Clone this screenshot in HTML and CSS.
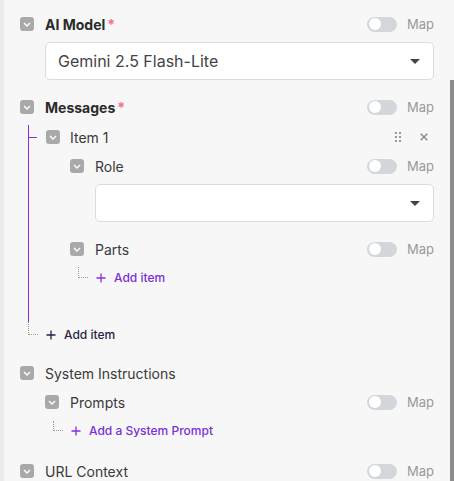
FILE: index.html
```html
<!DOCTYPE html>
<html lang="en">
<head>
<meta charset="UTF-8" />
<meta name="viewport" content="width=device-width, initial-scale=1" />
<title>Node parameters</title>
<link rel="stylesheet" href="styles.css">
</head>
<body>

<div class="panel">

  <!-- AI Model -->
  <div class="field">
    <div class="row">
      <span class="collapse"><svg width="8" height="5" viewBox="0 0 8 5"><path d="M1 1l3 3 3-3" fill="none" stroke="#fff" stroke-width="1.4"/></svg></span>
      <span class="label strong">AI Model<span class="req">*</span></span>
      <span class="map"><span class="toggle"></span>Map</span>
    </div>
    <div class="select"><span>Gemini 2.5 Flash-Lite</span><span class="caret"></span></div>
  </div>

  <!-- Messages -->
  <div class="field">
    <div class="row">
      <span class="collapse"><svg width="8" height="5" viewBox="0 0 8 5"><path d="M1 1l3 3 3-3" fill="none" stroke="#fff" stroke-width="1.4"/></svg></span>
      <span class="label strong">Messages<span class="req">*</span></span>
      <span class="map"><span class="toggle"></span>Map</span>
    </div>

    <div class="items">
      <div class="item-row">
        <span class="tick"></span>
        <span class="collapse"><svg width="8" height="5" viewBox="0 0 8 5"><path d="M1 1l3 3 3-3" fill="none" stroke="#fff" stroke-width="1.4"/></svg></span>
        <span class="label">Item 1</span>
        <span class="item-tools">
          <svg width="6" height="10" viewBox="0 0 6 10" fill="#999"><rect x="0" y="0" width="2" height="2"/><rect x="4" y="0" width="2" height="2"/><rect x="0" y="4" width="2" height="2"/><rect x="4" y="4" width="2" height="2"/><rect x="0" y="8" width="2" height="2"/><rect x="4" y="8" width="2" height="2"/></svg>
          <svg width="8" height="8" viewBox="0 0 8 8"><path d="M0.7 0.7l6.6 6.6M7.3 0.7l-6.6 6.6" stroke="#888" stroke-width="1.4"/></svg>
        </span>
      </div>

      <div class="item-body">
        <div class="field">
          <div class="row">
            <span class="collapse"><svg width="8" height="5" viewBox="0 0 8 5"><path d="M1 1l3 3 3-3" fill="none" stroke="#fff" stroke-width="1.4"/></svg></span>
            <span class="label">Role</span>
            <span class="map"><span class="toggle"></span>Map</span>
          </div>
          <div class="select"><span></span><span class="caret"></span></div>
        </div>

        <div class="field">
          <div class="row">
            <span class="collapse"><svg width="8" height="5" viewBox="0 0 8 5"><path d="M1 1l3 3 3-3" fill="none" stroke="#fff" stroke-width="1.4"/></svg></span>
            <span class="label">Parts</span>
            <span class="map"><span class="toggle"></span>Map</span>
          </div>
          <div class="add-row">
            <span class="elbow"></span>
            <svg class="plus" width="10" height="10" viewBox="0 0 10 10"><path d="M5 0.5v9M0.5 5h9" stroke="currentColor" stroke-width="1.3"/></svg>
            <span class="add-text">Add item</span>
          </div>
        </div>
      </div>
    </div>

    <div class="add-row outer">
      <span class="elbow"></span>
      <svg class="plus" width="10" height="10" viewBox="0 0 10 10"><path d="M5 0.5v9M0.5 5h9" stroke="currentColor" stroke-width="1.3"/></svg>
      <span class="add-text">Add item</span>
    </div>
  </div>

  <!-- System Instructions -->
  <div class="field">
    <div class="row">
      <span class="collapse"><svg width="8" height="5" viewBox="0 0 8 5"><path d="M1 1l3 3 3-3" fill="none" stroke="#fff" stroke-width="1.4"/></svg></span>
      <span class="label">System Instructions</span>
    </div>
    <div class="sub">
      <div class="row">
        <span class="collapse"><svg width="8" height="5" viewBox="0 0 8 5"><path d="M1 1l3 3 3-3" fill="none" stroke="#fff" stroke-width="1.4"/></svg></span>
        <span class="label">Prompts</span>
        <span class="map"><span class="toggle"></span>Map</span>
      </div>
      <div class="add-row">
        <span class="elbow"></span>
        <svg class="plus" width="10" height="10" viewBox="0 0 10 10"><path d="M5 0.5v9M0.5 5h9" stroke="currentColor" stroke-width="1.3"/></svg>
        <span class="add-text">Add a System Prompt</span>
      </div>
    </div>
  </div>

  <!-- URL Context -->
  <div class="field">
    <div class="row">
      <span class="collapse"><svg width="8" height="5" viewBox="0 0 8 5"><path d="M1 1l3 3 3-3" fill="none" stroke="#fff" stroke-width="1.4"/></svg></span>
      <span class="label">URL Context</span>
      <span class="map"><span class="toggle"></span>Map</span>
    </div>
  </div>

</div>

<div class="scroll-thumb"></div>

</body>
</html>
```

FILE: styles.css
```css
html, body { margin: 0; height: 100%; overflow: hidden; }
body { font-family: Inter, "Noto Sans", sans-serif; background: #f7f7f7; color: #333; }

.panel { border-left: 4px solid #ececec; padding: 9px 20px 0 16px; min-height: 100%; box-sizing: border-box; }

.field { margin-bottom: 12px; }
.item-body .field:last-child { margin-bottom: 0; }

.row { display: flex; align-items: center; height: 30px; }

.collapse { width: 14px; height: 14px; border-radius: 3px; background: #a9a9a9; display: flex; align-items: center; justify-content: center; flex: none; margin-right: 11px; }

.label { font-size: 14px; color: #3a3a3a; white-space: nowrap; }
.label.strong { font-weight: 700; color: #2a2a2a; }
.req { color: #f0728f; margin-left: 2px; }

.map { margin-left: auto; display: flex; align-items: center; gap: 10px; font-size: 13px; color: #999; }
.toggle { width: 30px; height: 15px; border-radius: 8px; background: #d3d7dc; position: relative; }
.toggle::after { content: ""; position: absolute; left: 2px; top: 1.5px; width: 12px; height: 12px; border-radius: 50%; background: #fff; }

.select { margin: 3px 0 0 25px; height: 38px; box-sizing: border-box; background: #fff; border: 1px solid #dcdcdc; border-radius: 5px; display: flex; align-items: center; justify-content: space-between; padding: 0 13px 0 12px; font-size: 16px; color: #444; }
.caret { width: 0; height: 0; border-left: 5px solid transparent; border-right: 5px solid transparent; border-top: 5px solid #444; }

/* list of message items with the purple guide line */
.items { margin: 3px 0 0 8px; border-left: 1px solid #8a2be2; padding-bottom: 32px; }
.item-row { display: flex; align-items: center; height: 24px; }
.tick { width: 8px; height: 1px; background: #8a2be2; margin-right: 9px; }
.item-row .collapse { margin-right: 10px; }
.item-tools { margin-left: auto; display: flex; align-items: center; gap: 19px; padding-right: 6px; }

.item-body { margin-top: 2px; padding-left: 41px; }

/* "add" links hanging off a dotted elbow */
.add-row { display: flex; align-items: flex-start; height: 26px; margin-left: 8px; color: #7b2fd8; }
.elbow { width: 10px; height: 11px; margin-top: 3px; border-left: 1px dotted #999; border-bottom: 1px dotted #999; box-sizing: border-box; flex: none; }
.plus { flex: none; margin: 9px 0 0 8px; color: #8a2be2; }
.add-text { font-size: 12px; font-weight: 500; line-height: 14px; margin: 7px 0 0 8px; }

.add-row.outer { height: 24px; color: #2b1d45; }
.add-row.outer .elbow { margin-top: 0; height: 13px; }
.add-row.outer .plus { margin-top: 8px; color: #2b1d45; }
.add-row.outer .add-text { margin-top: 6px; }

.sub { padding-left: 25px; }
.sub .row { height: 28px; }
.sub .add-row { height: 28px; }
.sub .add-row .elbow { margin-top: 5px; height: 10px; }
.sub .add-row .plus { margin-top: 10px; }
.sub .add-row .add-text { margin-top: 8px; }

.scroll-thumb { position: fixed; right: 0; top: 80px; bottom: 0; width: 4px; background: #8c8c8c; }
```
